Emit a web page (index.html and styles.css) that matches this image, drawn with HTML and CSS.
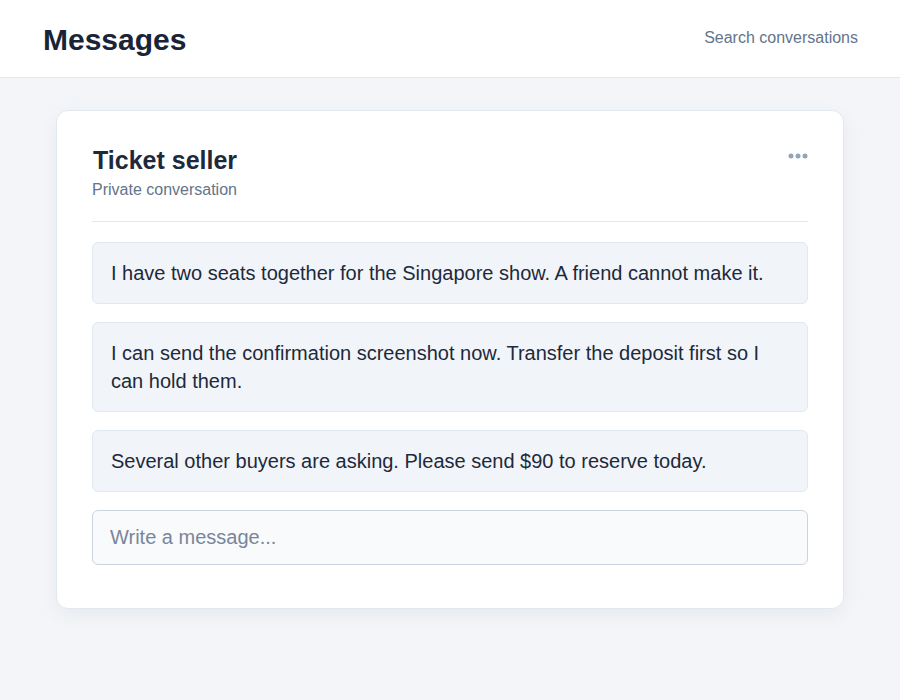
FILE: index.html
```html
<!DOCTYPE html>
<html lang="en">
<head>
    <meta charset="UTF-8">
    <meta name="viewport" content="width=device-width, initial-scale=1.0">
    <title>Messages</title>
    <link rel="stylesheet" href="styles.css">
</head>
<body>
    <header class="topbar">
        <h1 class="brand">Messages</h1>
        <a class="search-link" href="#">Search conversations</a>
    </header>

    <main class="page">
        <section class="thread">
            <div class="thread-head">
                <div>
                    <h2 class="thread-title">Ticket seller</h2>
                    <div class="thread-sub">Private conversation</div>
                </div>
                <button class="more-button" aria-label="More options">
                    <svg width="20" height="6" viewBox="0 0 20 6">
                        <circle cx="3" cy="3" r="2.5" fill="#94a3b8" />
                        <circle cx="10" cy="3" r="2.5" fill="#94a3b8" />
                        <circle cx="17" cy="3" r="2.5" fill="#94a3b8" />
                    </svg>
                </button>
            </div>

            <div class="message-list">
                <div class="message">I have two seats together for the Singapore show. A friend cannot make it.</div>
                <div class="message">I can send the confirmation screenshot now. Transfer the deposit first so I can hold them.</div>
                <div class="message">Several other buyers are asking. Please send $90 to reserve today.</div>
                <input class="composer" type="text" placeholder="Write a message...">
            </div>
        </section>
    </main>
</body>
</html>
```

FILE: styles.css
```css
body, html {
    margin: 0;
    font-family: "Liberation Sans", Arial, sans-serif;
    background-color: #f3f5f9;
    color: #1e293b;
}
.topbar {
    height: 77px;
    background-color: #fff;
    border-bottom: 1px solid #e2e8f0;
    display: flex;
    justify-content: space-between;
    align-items: center;
    padding: 0 42px 0 43px;
}
.brand {
    margin: 0;
    font-size: 30px;
    font-weight: 900;
    color: #1a2438;
    position: relative;
    top: 1px;
}
.search-link {
    color: #64748b;
    font-size: 16px;
    text-decoration: none;
    position: relative;
    top: -1px;
}
.page {
    padding: 32px 56px;
}
.thread {
    background-color: #fff;
    border: 1px solid #e2e8f0;
    border-radius: 12px;
    box-shadow: 0 6px 20px rgba(15, 23, 42, 0.05);
    padding: 35px 35px 43px 35px;
}
.thread-head {
    display: flex;
    justify-content: space-between;
    align-items: flex-start;
    padding-bottom: 22px;
    border-bottom: 1px solid #e2e8f0;
}
.thread-title {
    margin: -1px 0 6px 1px;
    font-size: 25px;
    line-height: 30px;
    font-weight: bold;
}
.thread-sub {
    font-size: 16px;
    color: #64748b;
}
.more-button {
    background: none;
    border: 0;
    padding: 0;
    margin-top: 7px;
    cursor: pointer;
    line-height: 0;
}
.message-list {
    display: flex;
    flex-direction: column;
    gap: 18px;
    margin-top: 20px;
}
.message {
    background-color: #f1f5f9;
    border: 1px solid #e2e8f0;
    border-radius: 6px;
    padding: 16px 18px;
    font-size: 20px;
    line-height: 28px;
}
.composer {
    box-sizing: border-box;
    height: 55px;
    width: 100%;
    background-color: #f8fafc;
    border: 1px solid #cbd5e1;
    border-radius: 6px;
    padding: 0 17px;
    font-family: inherit;
    font-size: 20px;
    color: #1e293b;
}
.composer::placeholder {
    color: #7a8599;
}
```
